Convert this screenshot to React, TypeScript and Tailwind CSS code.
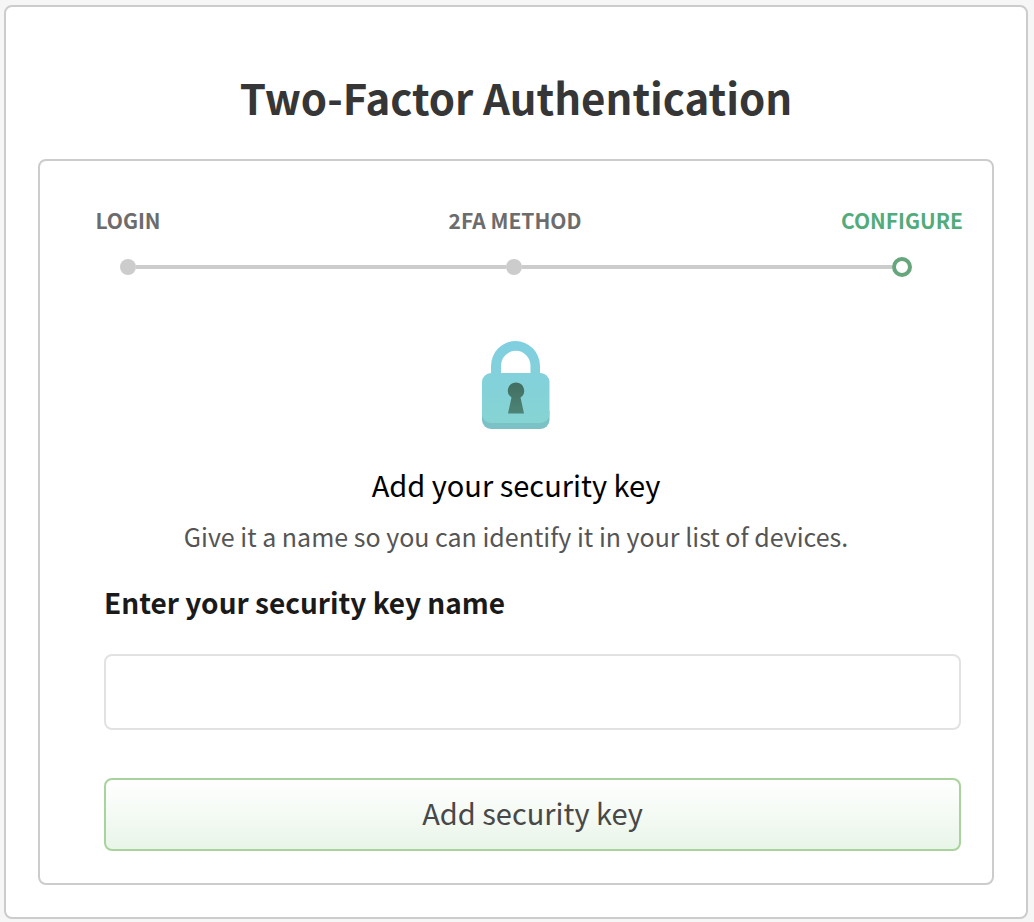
import clsx from "clsx";

const steps = [
  { label: "LOGIN", current: false },
  { label: "2FA METHOD", current: false },
  { label: "CONFIGURE", current: true },
];

function Stepper() {
  return (
    <nav aria-label="Progress">
      <ol className="mr-[26px] ml-6 flex justify-between">
        {steps.map((step) => (
          <li
            key={step.label}
            aria-current={step.current ? "step" : undefined}
            className={clsx(
              "flex w-32 justify-center text-[21px] leading-8 font-bold whitespace-nowrap",
              step.current ? "text-[#52ab7b]" : "text-[#6c6c6c]",
            )}
          >
            {step.label}
          </li>
        ))}
      </ol>
      <div aria-hidden="true" className="mx-20 mt-[21px] flex items-center">
        <span className="size-4 rounded-full bg-[#cccccc]" />
        <span className="h-1 flex-1 bg-[#cccccc]" />
        <span className="size-4 rounded-full bg-[#cccccc]" />
        <span className="h-1 flex-1 bg-[#cccccc]" />
        <span className="size-5 rounded-full border-4 border-[#67a67c] bg-white" />
      </div>
    </nav>
  );
}

function LockIcon() {
  return (
    <svg width="68" height="88" viewBox="0 0 68 88" aria-hidden="true" className="block">
      <defs>
        <linearGradient id="lock-body" x1="0" y1="0" x2="0" y2="88" gradientUnits="userSpaceOnUse">
          <stop offset="0" stopColor="#80cfe0" />
          <stop offset="1" stopColor="#87d4d2" />
        </linearGradient>
        <linearGradient id="lock-hole" x1="0" y1="0" x2="0" y2="1">
          <stop offset="0" stopColor="#416e60" />
          <stop offset="1" stopColor="#4d8477" />
        </linearGradient>
      </defs>
      <path
        d="M9 36V25a24.5 25 0 0 1 49 0v11H48.500V25a14.500 15 0 0 0-29.500 0v11z"
        fill="url(#lock-body)"
      />
      <path d="M0 70h67.500v9a9 9 0 0 1-9 9H9a9 9 0 0 1-9-9z" fill="#7bc2c6" />
      <path
        d="M9 32h49.500a9 9 0 0 1 9 9v32a9 9 0 0 1-9 9H9a9 9 0 0 1-9-9V41a9 9 0 0 1 9-9z"
        fill="url(#lock-body)"
      />
      <path
        d="M34 41.500a8.200 8.200 0 0 1 4.500 15L42 72.500H26l3.500-16a8.200 8.200 0 0 1 4.500-15z"
        fill="url(#lock-hole)"
      />
    </svg>
  );
}

export default function App() {
  return (
    <div className="min-h-screen bg-[#f6f6f6] pt-[5px] pr-1.5 pb-[3px] pl-1 font-['Noto_Sans_CJK_SC',sans-serif]">
      <main className="rounded-lg border-2 border-[#cccccc] bg-white px-8 pt-[62px] pb-8">
        <h1 className="text-center text-[42px] leading-[56px] font-bold text-[#363636]">
          Two-Factor Authentication
        </h1>
        <section className="mt-[34px] rounded-lg border-2 border-[#cccccc] pt-[43px] pb-8">
          <Stepper />
          <div className="mt-16 flex flex-col items-center text-center">
            <LockIcon />
            <h2 className="mt-[35px] text-[29px] leading-10 text-black">Add your security key</h2>
            <p className="mt-3 text-[25px] leading-10 text-[#555555]">
              Give it a name so you can identify it in your list of devices.
            </p>
          </div>
          <form className="mt-[26px] mr-[31px] ml-16" onSubmit={(event) => event.preventDefault()}>
            <label htmlFor="key-name" className="block text-[28px] leading-10 font-bold text-[#1a1a1a]">
              Enter your security key name
            </label>
            <input
              id="key-name"
              type="text"
              className="mt-8 block h-[76px] w-full rounded-lg border-2 border-[#e2e2e2] bg-white px-4 text-[29px] outline-none focus:border-[#a9d39c]"
            />
            <button
              type="submit"
              className="mt-12 block h-[73px] w-full rounded-lg border-2 border-[#a9d39c] bg-linear-to-b from-white to-[#e9f5e9] pb-1 text-[29px] text-[#484848]"
            >
              Add security key
            </button>
          </form>
        </section>
      </main>
    </div>
  );
}
